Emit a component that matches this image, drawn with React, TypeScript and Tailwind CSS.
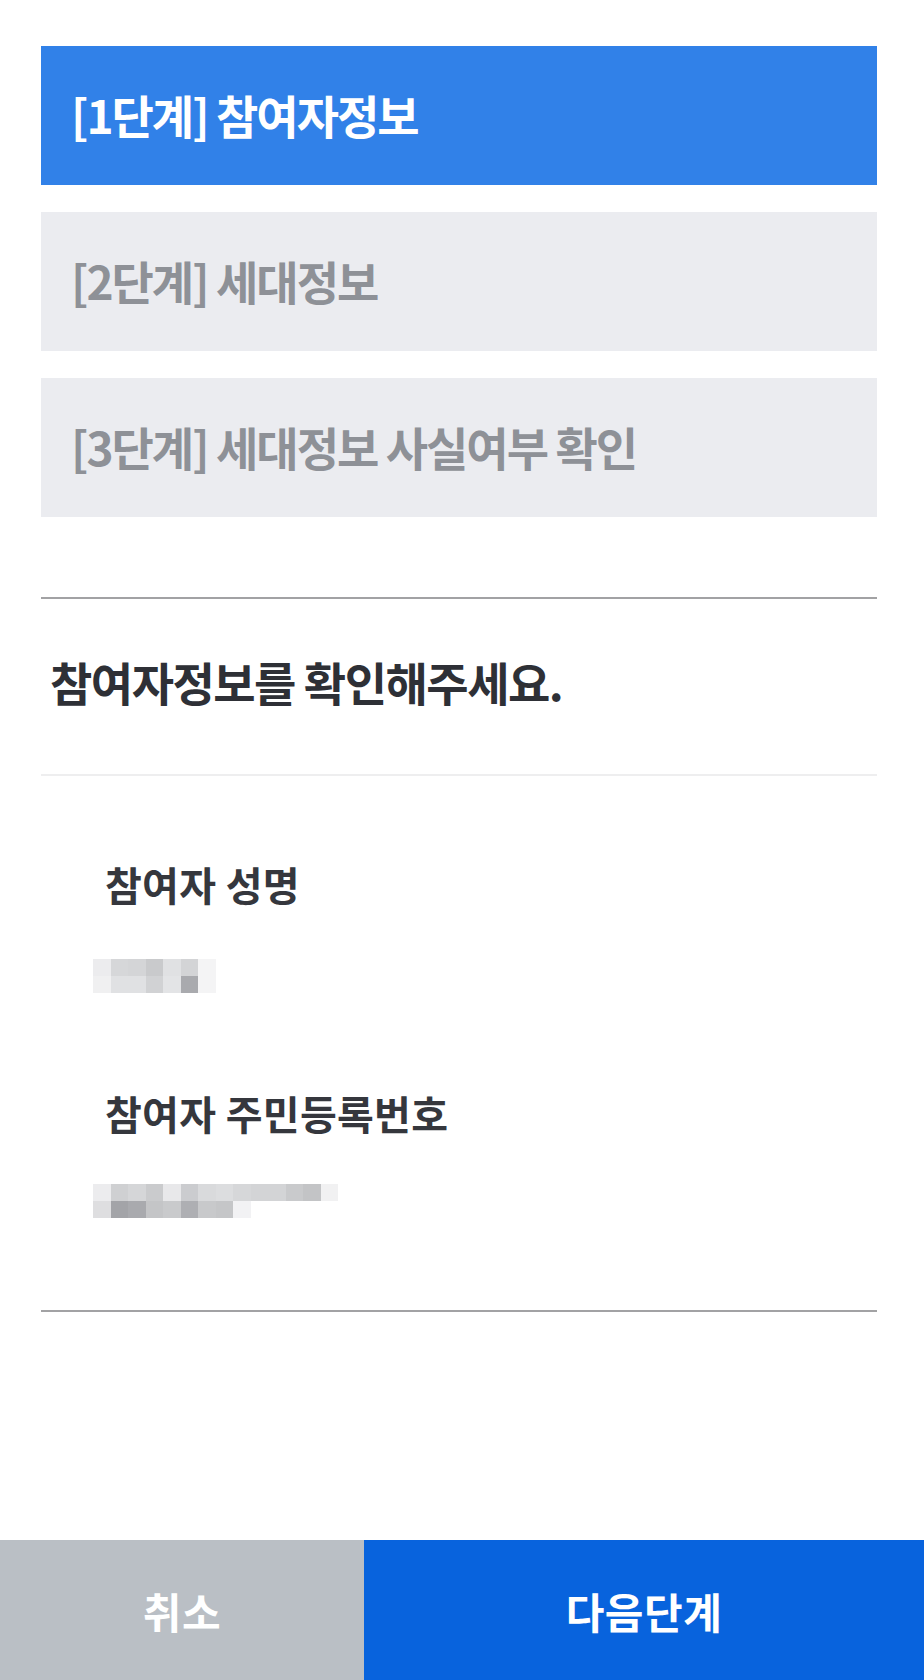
import React from "react";

const v1Row1 = ["#ececee", "#d6d7d9", "#d4d5d7", "#c9cacc", "#e0e1e3", "#d3d4d6", "#f4f4f5"];
const v1Row2 = ["#f0f0f1", "#e0e1e3", "#e0e1e3", "#d1d2d4", "#e3e4e6", "#a9aaae", "#f4f4f5"];
const v2Row1 = [
  "#ececee", "#cfd0d2", "#d5d6d8", "#cacbcd", "#e8e8ea", "#cbcccf", "#d9dadc",
  "#dcdddf", "#d6d7d9", "#d3d4d6", "#d3d4d6", "#c9cacc", "#c3c4c6", "#f1f1f2",
];
const v2Row2 = ["#dedee0", "#a3a4a8", "#a9aaae", "#c4c5c7", "#c9cacc", "#aeafb3", "#c8c9cb", "#c5c6c8", "#f2f2f4"];

function Pixels({ rows }: { rows: string[][] }) {
  return (
    <div className="flex flex-col">
      {rows.map((r, i) => (
        <div key={i} className="flex">
          {r.map((c, j) => (
            <div key={j} className="w-[17.5px] h-[17px]" style={{ backgroundColor: c }} />
          ))}
        </div>
      ))}
    </div>
  );
}

export default function App() {
  return (
    <div className="w-[924px] h-[1680px] bg-white flex flex-col font-['Noto_Sans_CJK_KR',sans-serif]">
      <div className="pl-[41px] pr-[47px] pt-[46px]">
        <div className="flex flex-col gap-[27px]">
          <div className="h-[139px] bg-[#3181e8] flex items-center pl-[30px] pb-[4px]">
            <span className="text-[46px] leading-none font-bold tracking-[-2px] text-white">[1단계] 참여자정보</span>
          </div>
          <div className="h-[139px] bg-[#ebecf0] flex items-center pl-[30px] pb-[4px]">
            <span className="text-[46px] leading-none font-bold tracking-[-2px] text-[#8e9197]">[2단계] 세대정보</span>
          </div>
          <div className="h-[139px] bg-[#ebecf0] flex items-center pl-[30px] pb-[4px]">
            <span className="text-[46px] leading-none font-bold tracking-[-2px] text-[#8e9197]">[3단계] 세대정보 사실여부 확인</span>
          </div>
        </div>

        <div className="mt-[80px] h-[2px] bg-[#a2a2a4]" />
        <div className="h-[175px] flex items-center pl-[9px] pb-[12px]">
          <h1 className="text-[46px] leading-none font-bold tracking-[-1.5px] text-[#2e3036]">참여자정보를 확인해주세요.</h1>
        </div>
        <div className="h-[2px] bg-[#eeeeef]" />

        <div className="pt-[83px] pb-[92px]">
          <div className="pl-[64px] text-[40px] leading-[50px] font-bold tracking-[0.3px] text-[#35373d]">참여자 성명</div>
          <div className="pl-[52px] mt-[50px]">
            <Pixels rows={[v1Row1, v1Row2]} />
          </div>
          <div className="pl-[64px] mt-[95px] text-[40px] leading-[50px] font-bold tracking-[0.3px] text-[#35373d]">참여자 주민등록번호</div>
          <div className="pl-[52px] mt-[46px]">
            <Pixels rows={[v2Row1, v2Row2]} />
          </div>
        </div>
        <div className="h-[2px] bg-[#a2a2a4]" />
      </div>

      <div className="flex-1" />

      <div className="h-[140px] flex">
        <button className="w-[364px] bg-[#babfc5] flex items-center justify-center text-white text-[42px] font-bold tracking-[0.5px]">
          취소
        </button>
        <button className="flex-1 bg-[#0863dd] flex items-center justify-center text-white text-[42px] font-bold tracking-[0.5px]">
          다음단계
        </button>
      </div>
    </div>
  );
}
